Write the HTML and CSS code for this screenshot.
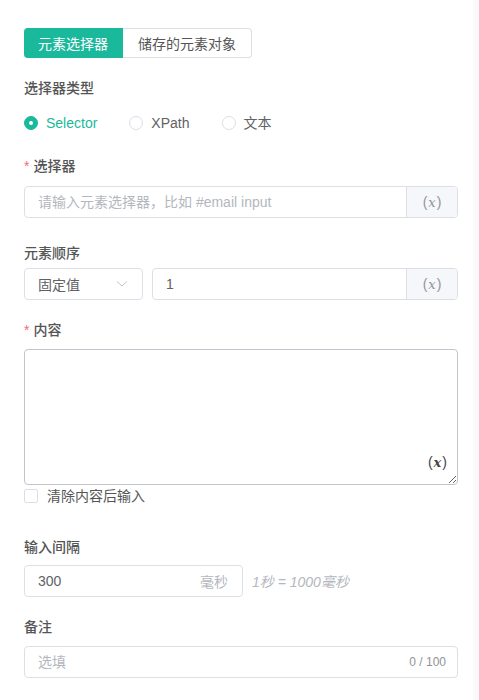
FILE: index.html
```html
<html>
<head>
  <meta charset="utf-8">
  <link rel="stylesheet" href="styles.css">
</head>
<body>
  <div class="panel">

    <div class="tabs">
      <button class="tab active">元素选择器</button>
      <button class="tab">储存的元素对象</button>
    </div>

    <div class="label label-first">选择器类型</div>
    <div class="radio-row">
      <label class="radio checked"><span class="dot"></span>Selector</label>
      <label class="radio"><span class="dot"></span>XPath</label>
      <label class="radio"><span class="dot"></span>文本</label>
    </div>

    <div class="label label-req">选择器</div>
    <div class="input-group">
      <input class="field" type="text" placeholder="请输入元素选择器，比如 #email input">
      <span class="append">(<i>x</i>)</span>
    </div>

    <div class="label label-order">元素顺序</div>
    <div class="order-row">
      <div class="select">
        <span>固定值</span>
        <svg width="12" height="8" viewBox="0 0 12 8"><path d="M1 1.5 L6 6 L11 1.5" fill="none" stroke="#c0c4cc" stroke-width="1"/></svg>
      </div>
      <div class="input-group grow">
        <input class="field" type="text" value="1">
        <span class="append">(<i>x</i>)</span>
      </div>
    </div>

    <div class="label label-req label-content">内容</div>
    <div class="textarea-wrap">
      <textarea class="textarea"></textarea>
      <span class="var-btn">(<i>x</i>)</span>
    </div>
    <label class="checkbox"><span class="box"></span>清除内容后输入</label>

    <div class="label label-interval">输入间隔</div>
    <div class="interval-row">
      <div class="input-suffix">
        <input class="field" type="text" value="300">
        <span class="suffix">毫秒</span>
      </div>
      <span class="hint">1秒 = 1000毫秒</span>
    </div>

    <div class="label label-note">备注</div>
    <div class="input-suffix full">
      <input class="field" type="text" placeholder="选填">
      <span class="count">0 / 100</span>
    </div>

  </div>
</body>
</html>
```

FILE: styles.css
```css
html {
  background-color: #fafafa;
}

body {
  margin: 0;
  font-family: "Liberation Sans", "Noto Sans CJK SC", sans-serif;
  font-size: 14px;
  color: #606266;
}

.panel {
  width: 473px;
  min-height: 700px;
  box-sizing: border-box;
  padding: 28px 15px 0 24px;
  background-color: #fff;
}

/* tabs */
.tabs {
  display: flex;
}
.tab {
  height: 30px;
  padding: 0;
  font-family: inherit;
  font-size: 14px;
  color: #555;
  background: #fff;
  border: 1px solid #dcdfe6;
  border-left: none;
  border-radius: 0 4px 4px 0;
  cursor: pointer;
  white-space: nowrap;
}
.tab.active {
  width: 99px;
  color: #fff;
  background-color: #1ab99b;
  border-color: #1ab99b;
  border-radius: 4px 0 0 4px;
}
.tab + .tab {
  width: 129px;
}

/* labels */
.label {
  line-height: 20px;
  font-weight: 500;
  color: #555;
}
.label-first { margin-top: 20px; }
.label-req { margin-top: 23px; }
.label-req::before {
  content: "*";
  color: #f56c6c;
  margin-right: 4px;
}
.label-order { margin-top: 25px; margin-bottom: 5px; }
.label-content { margin-top: 20px; margin-bottom: 9px; }
.label-interval { margin-top: 31px; margin-bottom: 8px; }
.label-note { margin-top: 20px; margin-bottom: 9px; }
.label-req:not(.label-content) { margin-bottom: 10px; }

/* radios */
.radio-row {
  display: flex;
  margin-top: 15px;
  line-height: 20px;
}
.radio {
  display: flex;
  align-items: center;
  color: #606266;
  margin-right: 32px;
}
.radio .dot {
  width: 12px;
  height: 12px;
  border: 1px solid #dcdfe6;
  border-radius: 50%;
  margin-right: 8px;
  box-sizing: content-box;
}
.radio.checked {
  color: #1ab99b;
}
.radio.checked .dot {
  background: #1ab99b;
  border-color: #1ab99b;
  position: relative;
}
.radio.checked .dot::after {
  content: "";
  position: absolute;
  width: 4px;
  height: 4px;
  left: 4px;
  top: 4px;
  border-radius: 50%;
  background: #fff;
}

/* inputs */
.input-group,
.input-suffix {
  display: flex;
  height: 32px;
  box-sizing: border-box;
  border: 1px solid #dcdfe6;
  border-radius: 4px;
  overflow: hidden;
}
.field {
  flex: 1;
  min-width: 0;
  border: none;
  outline: none;
  padding: 0 13px;
  font-family: inherit;
  font-size: 14px;
  color: #606266;
  background: transparent;
}
.field::placeholder {
  color: #b4b7bd;
}
.append {
  width: 50px;
  display: flex;
  align-items: center;
  justify-content: center;
  background-color: #f5f7fa;
  border-left: 1px solid #dcdfe6;
  color: #909399;
  font-size: 14px;
}
.append i,
.var-btn i {
  font-family: "DejaVu Serif", serif;
  font-size: 13px;
  padding: 0 1px;
}

.order-row {
  display: flex;
  gap: 9px;
}
.select {
  width: 119px;
  height: 32px;
  box-sizing: border-box;
  border: 1px solid #dcdfe6;
  border-radius: 4px;
  display: flex;
  align-items: center;
  justify-content: space-between;
  padding: 0 14px 0 13px;
}
.grow {
  flex: 1;
}

/* textarea */
.textarea-wrap {
  position: relative;
  height: 136px;
}
.textarea {
  width: 100%;
  height: 136px;
  box-sizing: border-box;
  border: 1px solid #c0c4cc;
  border-radius: 4px;
  resize: vertical;
  outline: none;
  display: block;
}
.var-btn {
  position: absolute;
  right: 11px;
  bottom: 15px;
  color: #444;
  font-size: 14px;
}
.var-btn i {
  font-weight: bold;
}

.checkbox {
  display: flex;
  align-items: center;
  line-height: 20px;
  margin-top: 1px;
  color: #555;
}
.checkbox .box {
  width: 12px;
  height: 12px;
  border: 1px solid #dcdfe6;
  border-radius: 2px;
  margin-right: 9px;
}

/* interval */
.interval-row {
  display: flex;
  align-items: center;
  gap: 9px;
}
.input-suffix {
  width: 219px;
  align-items: center;
}
.suffix {
  color: #b4b7bd;
  padding-right: 14px;
}
.hint {
  font-style: italic;
  color: #b4b7bd;
  font-size: 14px;
}

.input-suffix.full {
  width: 100%;
}
.count {
  color: #909399;
  font-size: 12px;
  padding-right: 11px;
}
```
